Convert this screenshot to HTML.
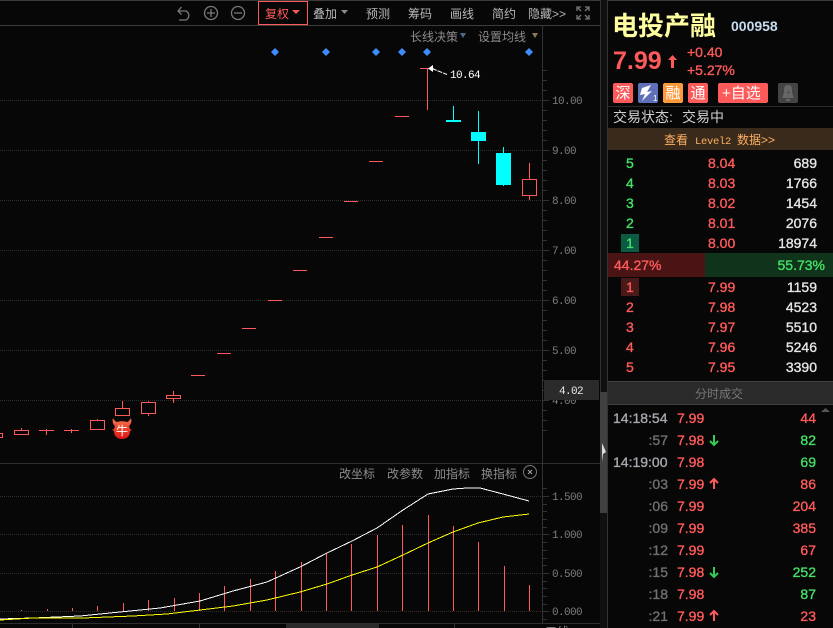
<!DOCTYPE html>
<html><head><meta charset="utf-8"><style>
html,body{margin:0;padding:0;background:#070707;width:833px;height:628px;overflow:hidden}
svg{display:block;position:absolute;left:0;top:0}
text{font-family:"Liberation Sans","WenQuanYi Zen Hei",sans-serif;font-size:14px;white-space:pre}
.c{font-family:"Liberation Sans","WenQuanYi Zen Hei","Noto Sans CJK SC",sans-serif;font-size:12px;fill:#8c8c8c}
.m{font-family:"Liberation Mono",monospace;font-size:11px;letter-spacing:-.6px;fill:#7d7d7d}
.r{fill:#ff5a5a;stroke:#ff5a5a;stroke-width:.35px}
.g{fill:#44e066;stroke:#44e066;stroke-width:.35px}
.w{fill:#e6e6e6;stroke:#e6e6e6;stroke-width:.35px}
.t{fill:#707070;stroke:#707070;stroke-width:.35px}
.h{fill:#a8a8b0;stroke:#a8a8b0;stroke-width:.35px}
.e{text-anchor:end}
.cr{shape-rendering:crispEdges}
</style></head><body>
<svg width="833" height="628" viewBox="0 0 833 628">
<rect width="833" height="628" fill="#070707"/>
<g class="cr">
<rect x="0" y="0" width="600" height="1" fill="#3a3a3a"/>
<rect x="0" y="25" width="600" height="1" fill="#3c3c3c"/>
<g stroke="#2e2e2e" stroke-dasharray="1 1" stroke-width="1">
<path d="M0 100.5H543M0 150.5H543M0 200.5H543M0 250.5H543M0 300.5H543M0 350.5H543M0 400.5H543M0 496.5H543M0 534.5H543M0 573.5H543M0 611.5H543"/>
</g>
<rect x="0" y="463" width="600" height="1" fill="#2e2e2e"/>
<rect x="0" y="623" width="600" height="1" fill="#2e2e2e"/>
<rect x="286" y="624" width="93" height="4" fill="#2a2a2a"/>
<rect x="72" y="624" width="1" height="4" fill="#333"/><rect x="199" y="624" width="1" height="4" fill="#333"/><rect x="454" y="624" width="1" height="4" fill="#333"/>
<rect x="542" y="26" width="1" height="597" fill="#333"/>
<path stroke="#333" d="M543 70.5h4M543 80.5h4M543 90.5h4M543 100.5h6M543 110.5h4M543 120.5h4M543 130.5h4M543 140.5h4M543 150.5h6M543 160.5h4M543 170.5h4M543 180.5h4M543 190.5h4M543 200.5h6M543 210.5h4M543 220.5h4M543 230.5h4M543 240.5h4M543 250.5h6M543 260.5h4M543 270.5h4M543 280.5h4M543 290.5h4M543 300.5h6M543 310.5h4M543 320.5h4M543 330.5h4M543 340.5h4M543 350.5h6M543 360.5h4M543 370.5h4M543 380.5h4M543 390.5h4M543 400.5h6M543 410.5h4M543 420.5h4M543 430.5h4M543 488.5h4M543 496.5h6M543 504.5h4M543 511.5h4M543 519.5h4M543 527.5h4M543 534.5h6M543 542.5h4M543 550.5h4M543 558.5h4M543 565.5h4M543 573.5h6M543 581.5h4M543 588.5h4M543 596.5h4M543 604.5h4M543 611.5h6M543 619.5h4"/>
<!-- candles -->
<g fill="none" stroke="#ff5a5a" stroke-width="1">
<rect x="-3.5" y="433.5" width="6" height="4"/>
<rect x="14.5" y="430.5" width="14" height="4"/><path d="M21.5 428v2"/>
<path d="M39 430.5h15M46.5 429v6M64 430.5h15M71.5 429v4"/>
<rect x="90.5" y="420.5" width="14" height="9"/><path d="M97.5 419v1"/>
<rect x="115.5" y="408.5" width="14" height="7"/><path d="M122.5 401v7"/>
<rect x="141.5" y="402.500" width="14" height="11"/><path d="M148.5 401v1M148.5 414v2"/>
<rect x="166.5" y="395.5" width="14" height="3"/><path d="M173.5 391v4M173.5 399v4"/>
<path d="M191 375.5h14M217 353.5h14M242 328.5h14M268 300.5h14M293 270.5h14M319 237.5h14M344 201.5h14M369 161.5h14M395 116.5h14M420 68.5h14M427.5 68v42"/>
<rect x="522.5" y="179.5" width="14" height="16"/><path d="M529.5 163v16M529.5 196v4"/>
</g>
<g fill="#00ffff">
<rect x="446" y="120" width="15" height="2"/><rect x="453" y="106" width="1" height="14"/>
<rect x="471" y="132" width="15" height="9"/><rect x="478" y="111" width="1" height="53"/>
<rect x="496" y="153" width="15" height="32"/><rect x="503" y="147" width="1" height="39"/>
</g>
<!-- macd bars -->
<path stroke="#ff5a5a" fill="none" d="M21.5 611v-1M47.5 611v-2M72.5 611v-3M97.5 611v-5M123.5 611v-8M148.5 611v-11M174.5 611v-13M199.5 611v-18M224.5 611v-25M250.5 611v-32M275.5 611v-40M301.5 611v-49M326.5 611v-58M351.5 611v-67M377.5 611v-76M402.5 611v-86M428.5 611v-96M453.5 611v-85M478.5 611v-69M504.5 611v-45M529.5 611v-26"/>
<polyline fill="none" stroke="#fff" points="0,619 10,618.7 33,618 80,616 120,612 160,608 200,601 233,591 267,582 300,567 327,553 352,541 377,528 403,510 428,494 453,489 467,488 480,488 503,494 529,501"/>
<polyline fill="none" stroke="#ffff00" points="0,620 33,618 83,618 133,616 167,614 200,610 233,606 267,600 300,592 327,584 352,575 377,567 403,555 428,543 453,532 478,523 503,517 529,514"/>
<!-- scrollbar -->
<rect x="600" y="0" width="7" height="628" fill="#101010"/>
<rect x="600" y="0" width="1" height="392" fill="#303030"/>
<rect x="600" y="392" width="7" height="121" fill="#404040"/>
<rect x="607" y="0" width="1" height="628" fill="#333"/>
<!-- 4.02 -->
<rect x="544" y="380" width="55" height="20" fill="#2b2b2b"/>
<!-- right panel rules -->
<rect x="608" y="0" width="225" height="1" fill="#3a3a3a"/>
<rect x="608" y="106" width="225" height="1" fill="#2a2a2a"/>
<rect x="608" y="128" width="225" height="22" fill="#3a2a1c"/>
<rect x="621" y="234" width="18" height="18" fill="#0a5a44"/>
<rect x="608" y="253" width="97" height="24" fill="#4a1414"/>
<rect x="705" y="253" width="128" height="24" fill="#10331c"/>
<rect x="621" y="278" width="18" height="18" fill="#4a1a1a"/>
<rect x="608" y="381" width="225" height="23" fill="#2a2a2a"/>
<rect x="608" y="381" width="225" height="1" fill="#404040"/>
<rect x="608" y="404" width="225" height="1" fill="#404040"/>
<!-- toolbar box -->
<rect x="258.5" y="1.5" width="49" height="23" fill="none" stroke="#ff5a5a"/>
</g>
<path d="M602 443l4 9-3 2-1 8z" fill="#ddd"/>
<!-- toolbar icons -->
<g fill="none" stroke="#7a7a7a" stroke-width="1.3">
<path d="M178 11h8a5 5 0 0 1 0 9h-7M181.5 7l-3.5 4 3.5 3.5"/>
<circle cx="211" cy="13" r="6.5"/><path d="M207 13h8M211 9v8"/>
<circle cx="238" cy="13" r="6.5"/><path d="M234 13h8"/>
<path d="M577 11V7h4M585 7h4v4M577 15v4h4M585 19h4v-4M578 8l3 3M588 8l-3 3M578 18l3-3M588 18l-3-3"/>
</g>
<text class="c" x="265" y="18" style="fill:#ff5a5a">复权</text>
<path d="M292 10h8l-4 4z" fill="#ff5a5a"/>
<text class="c" x="313" y="18" style="fill:#b8b8b8">叠加</text>
<path d="M341 10h7l-3.500 4z" fill="#8c8c8c"/>
<text class="c" x="366" y="18" style="fill:#b8b8b8">预测</text>
<text class="c" x="408" y="18" style="fill:#b8b8b8">筹码</text>
<text class="c" x="450" y="18" style="fill:#b8b8b8">画线</text>
<text class="c" x="492" y="18" style="fill:#b8b8b8">简约</text>
<text class="c" x="528" y="18" style="fill:#b8b8b8">隐藏&gt;&gt;</text>
<text class="c" x="410" y="41">长线决策</text><path d="M460 33h6l-3 5z" fill="#4d6a8c"/>
<text class="c" x="478" y="41">设置均线</text><path d="M532 33h6l-3 5z" fill="#8c7a55"/>
<!-- diamonds -->
<g fill="#3f8cff">
<path d="M275 48l4 4-4 4-4-4z"/><path d="M326 48l4 4-4 4-4-4z"/><path d="M376 48l4 4-4 4-4-4z"/><path d="M402 48l4 4-4 4-4-4z"/><path d="M427 48l4 4-4 4-4-4z"/><path d="M529 48l4 4-4 4-4-4z"/>
</g>
<path d="M428 68.500l5-3.500v7z" fill="#fff"/><path d="M432 68.500l15 6" stroke="#fff" stroke-dasharray="5 1"/>
<text class="m" x="450" y="78" style="fill:#fff">10.64</text>
<!-- bull -->
<defs><linearGradient id="bu" x1="0" y1="0" x2="0" y2="1"><stop offset="0" stop-color="#f87850"/><stop offset="1" stop-color="#e01010"/></linearGradient></defs>
<path d="M113 418c-1 4 0 6 2 8l-1 3-2 1 2 1c0 5 3 8 8 8s8-3 8-8l2-1-2-1-1-3c2-2 3-4 2-8-1 2-3 4-4 4-3-1-7-1-10 0-1 0-3-2-4-4z" fill="url(#bu)"/>
<text x="116" y="435" style="font-size:12px;fill:#fff;font-family:'WenQuanYi Zen Hei',sans-serif">牛</text>
<!-- axis labels -->
<text class="m" x="552" y="104">10.00</text><text class="m" x="552" y="154">9.00</text><text class="m" x="552" y="204">8.00</text><text class="m" x="552" y="254">7.00</text><text class="m" x="552" y="304">6.00</text><text class="m" x="552" y="354">5.00</text>
<text class="m" x="552" y="404">4.00</text>
<rect x="544" y="380" width="55" height="20" fill="#2b2b2b"/>
<text class="m" x="559" y="394" style="fill:#e8e8e8">4.02</text>
<text class="m" x="552" y="500">1.500</text><text class="m" x="552" y="538">1.000</text><text class="m" x="552" y="577">0.500</text><text class="m" x="552" y="615">0.000</text>
<text class="c" x="339" y="478">改坐标</text><text class="c" x="387" y="478">改参数</text><text class="c" x="434" y="478">加指标</text><text class="c" x="481" y="478">换指标</text>
<circle cx="530" cy="472" r="6.500" fill="none" stroke="#777"/><path d="M528 470l4 4M532 470l-4 4" stroke="#999" stroke-width="1.200"/>
<text class="c" x="545" y="636">三线</text>
<!-- header -->
<text x="612" y="35" style="font-size:26px;font-weight:bold;fill:#ffffa0;font-family:'Noto Sans CJK SC',sans-serif">电投产融</text>
<text x="731" y="31" style="font-size:14px;font-weight:bold;fill:#c8dcf0">000958</text>
<text x="613" y="69" style="font-size:25px;font-weight:bold;fill:#ff5a5a">7.99</text>
<path d="M671 68v-8h-3l4.500-5 4.500 5h-3v8z" fill="#ff5a5a"/>
<text class="r" x="687" y="57">+0.40</text>
<text class="r" x="687" y="75">+5.27%</text>
<!-- badges -->
<g class="cr">
<rect x="613" y="83" width="20" height="20" rx="2" fill="#ff5a5a"/>
<rect x="638" y="83" width="20" height="20" rx="2" fill="#6070b8"/>
<rect x="663" y="83" width="20" height="20" rx="2" fill="#ff9a3c"/>
<rect x="688" y="83" width="20" height="20" rx="2" fill="#ff5a5a"/>
<rect x="718" y="83" width="50" height="20" rx="2" fill="#ff5a5a"/>
<rect x="778" y="83" width="20" height="20" rx="2" fill="#444"/>
</g>
<text x="615.500" y="98" style="font-size:15px;fill:#fff;font-family:'WenQuanYi Zen Hei',sans-serif">深</text>
<path d="M651 85l-9 3-2 7 5-1-3 7 10-10-5 1 4-7z" fill="#fff"/>
<text x="653" y="101" style="font-size:8px;fill:#fff">1</text>
<text x="665.500" y="98" style="font-size:15px;fill:#fff;font-family:'WenQuanYi Zen Hei',sans-serif">融</text>
<text x="690.500" y="98" style="font-size:15px;fill:#fff;font-family:'WenQuanYi Zen Hei',sans-serif">通</text>
<text x="722" y="98" style="font-size:15px;fill:#fff;font-family:'WenQuanYi Zen Hei',sans-serif">+自选</text>
<path d="M788 85c-3 0-4 2-4 5 0 3-1 6-2 8h12c-1-2-2-5-2-8 0-3-1-5-4-5zM786 99h4v2h-4z" fill="#666"/>
<path d="M789 89l-2 4h2l-1 3 2-4h-2z" fill="#444"/>
<text x="613" y="122" style="font-size:14px;fill:#d0d0d0;font-family:'WenQuanYi Zen Hei',sans-serif">交易状态:</text>
<text x="682" y="122" style="font-size:14px;fill:#d0d0d0;font-family:'WenQuanYi Zen Hei',sans-serif">交易中</text>
<text x="664" y="144" style="font-size:12px;fill:#ffb060;font-family:'WenQuanYi Zen Hei',sans-serif">查看</text>
<text x="695" y="144" style="font-size:10.5px;letter-spacing:-.3px;fill:#ffb060;font-family:'Liberation Mono',monospace">Level2</text>
<text x="737" y="144" style="font-size:12px;fill:#ffb060;font-family:'WenQuanYi Zen Hei',sans-serif">数据&gt;&gt;</text>
<!-- asks -->
<text x="626" y="168" class="g">5</text><text x="626" y="188" class="g">4</text><text x="626" y="208" class="g">3</text><text x="626" y="228" class="g">2</text><text x="626" y="248" class="g">1</text>
<text class="r" x="708" y="168">8.04</text><text class="r" x="708" y="188">8.03</text><text class="r" x="708" y="208">8.02</text><text class="r" x="708" y="228">8.01</text><text class="r" x="708" y="248">8.00</text>
<text class="w e" x="817" y="168">689</text><text class="w e" x="817" y="188">1766</text><text class="w e" x="817" y="208">1454</text><text class="w e" x="817" y="228">2076</text><text class="w e" x="817" y="248">18974</text>
<text class="r" x="614" y="270">44.27%</text><text class="g e" x="825" y="270">55.73%</text>
<text class="r" x="626" y="292">1</text><text class="r" x="626" y="312">2</text><text class="r" x="626" y="332">3</text><text class="r" x="626" y="352">4</text><text class="r" x="626" y="372">5</text>
<text class="r" x="708" y="292">7.99</text><text class="r" x="708" y="312">7.98</text><text class="r" x="708" y="332">7.97</text><text class="r" x="708" y="352">7.96</text><text class="r" x="708" y="372">7.95</text>
<text class="w e" x="817" y="292">1159</text><text class="w e" x="817" y="312">4523</text><text class="w e" x="817" y="332">5510</text><text class="w e" x="817" y="352">5246</text><text class="w e" x="817" y="372">3390</text>
<text x="695" y="398" style="font-size:12px;fill:#777;font-family:'WenQuanYi Zen Hei',sans-serif">分时成交</text>
<path d="M821 412l4.500-4 4.500 4z" fill="#555"/>
<!-- ticks -->
<text class="h" x="613" y="423">14:18:54</text><text class="r" x="677" y="423">7.99</text><text class="r e" x="816" y="423">44</text>
<text class="t e" x="668" y="445">:57</text><text class="r" x="677" y="445">7.98</text><text class="g e" x="816" y="445">82</text>
<text class="h" x="613" y="467">14:19:00</text><text class="r" x="677" y="467">7.98</text><text class="g e" x="816" y="467">69</text>
<text class="t e" x="668" y="489">:03</text><text class="r" x="677" y="489">7.99</text><text class="r e" x="816" y="489">86</text>
<text class="t e" x="668" y="511">:06</text><text class="r" x="677" y="511">7.99</text><text class="r e" x="816" y="511">204</text>
<text class="t e" x="668" y="533">:09</text><text class="r" x="677" y="533">7.99</text><text class="r e" x="816" y="533">385</text>
<text class="t e" x="668" y="555">:12</text><text class="r" x="677" y="555">7.99</text><text class="r e" x="816" y="555">67</text>
<text class="t e" x="668" y="577">:15</text><text class="r" x="677" y="577">7.98</text><text class="g e" x="816" y="577">252</text>
<text class="t e" x="668" y="599">:18</text><text class="r" x="677" y="599">7.98</text><text class="g e" x="816" y="599">87</text>
<text class="t e" x="668" y="621">:21</text><text class="r" x="677" y="621">7.99</text><text class="r e" x="816" y="621">23</text>
<g fill="none" stroke-width="2">
<path d="M714 435v10M710 441l4 4 4-4" stroke="#33cc55"/>
<path d="M714 489v-10M710 483l4-4 4 4" stroke="#ff5a5a"/>
<path d="M714 567v10M710 573l4 4 4-4" stroke="#33cc55"/>
<path d="M714 621v-10M710 615l4-4 4 4" stroke="#ff5a5a"/>
</g>
</svg>
</body></html>
